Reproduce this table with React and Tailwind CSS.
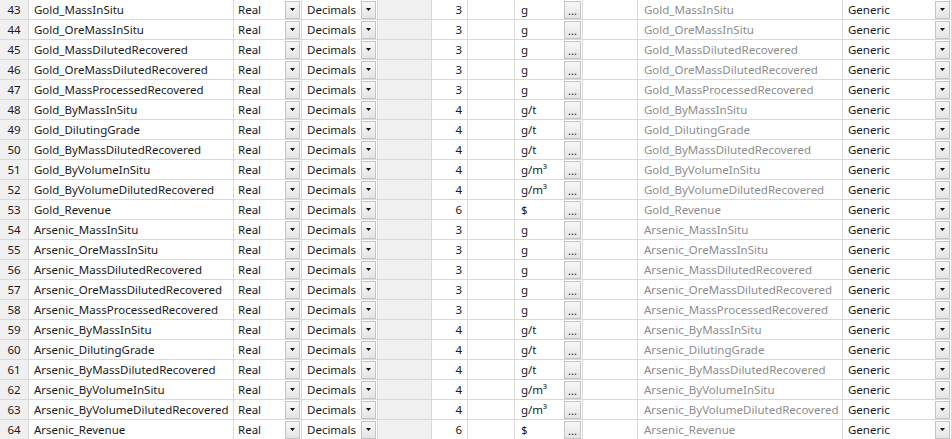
import React from 'react'

const rows = [
  [43, 'Gold_MassInSitu', 3, 'g'],
  [44, 'Gold_OreMassInSitu', 3, 'g'],
  [45, 'Gold_MassDilutedRecovered', 3, 'g'],
  [46, 'Gold_OreMassDilutedRecovered', 3, 'g'],
  [47, 'Gold_MassProcessedRecovered', 3, 'g'],
  [48, 'Gold_ByMassInSitu', 4, 'g/t'],
  [49, 'Gold_DilutingGrade', 4, 'g/t'],
  [50, 'Gold_ByMassDilutedRecovered', 4, 'g/t'],
  [51, 'Gold_ByVolumeInSitu', 4, 'g/m³'],
  [52, 'Gold_ByVolumeDilutedRecovered', 4, 'g/m³'],
  [53, 'Gold_Revenue', 6, '$'],
  [54, 'Arsenic_MassInSitu', 3, 'g'],
  [55, 'Arsenic_OreMassInSitu', 3, 'g'],
  [56, 'Arsenic_MassDilutedRecovered', 3, 'g'],
  [57, 'Arsenic_OreMassDilutedRecovered', 3, 'g'],
  [58, 'Arsenic_MassProcessedRecovered', 3, 'g'],
  [59, 'Arsenic_ByMassInSitu', 4, 'g/t'],
  [60, 'Arsenic_DilutingGrade', 4, 'g/t'],
  [61, 'Arsenic_ByMassDilutedRecovered', 4, 'g/t'],
  [62, 'Arsenic_ByVolumeInSitu', 4, 'g/m³'],
  [63, 'Arsenic_ByVolumeDilutedRecovered', 4, 'g/m³'],
  [64, 'Arsenic_Revenue', 6, '$'],
]

const cell = 'h-5 border-r border-b border-[#d9d9d9] flex items-center overflow-hidden whitespace-nowrap'

const DropButton = () => (
  <div className="ml-auto mr-px h-[18px] w-[15px] shrink-0 flex items-center justify-center border border-[#c3c3c3] bg-gradient-to-b from-[#f7f7f7] to-[#e4e4e4]">
    <svg width="5" height="3" viewBox="0 0 5 3">
      <path d="M0 0h5L2.5 3z" fill="#111" />
    </svg>
  </div>
)

const DotsButton = () => (
  <div className="ml-auto mr-px h-[18px] w-[17px] shrink-0 flex items-end justify-center border border-[#c3c3c3] bg-gradient-to-b from-[#f7f7f7] to-[#e4e4e4] text-[11px] leading-[14px] text-[#1a1a1a]">
    ...
  </div>
)

export default function App() {
  return (
    <div
      className="w-[952px] h-[439px] overflow-hidden bg-white text-[11.5px] text-[#1a1a1a]"
      style={{ fontFamily: '"Noto Sans", "Open Sans", sans-serif' }}
    >
      <div className="grid grid-cols-[29px_205px_68px_76px_54px_36px_47px_68px_55px_205px_109px]">
        {rows.map(([n, name, dec, unit]) => (
          <React.Fragment key={n}>
            <div className={`${cell} justify-center bg-[#f0f0f0] border-[#c8c8c8]`}>{n}</div>
            <div className={`${cell} pl-[5px]`}>{name}</div>
            <div className={`${cell} pl-1`}>
              <span>Real</span>
              <DropButton />
            </div>
            <div className={`${cell} pl-[5px]`}>
              <span>Decimals</span>
              <DropButton />
            </div>
            <div className={`${cell} bg-[#f0f0f0]`} />
            <div className={`${cell} justify-end pr-[5px]`}>{dec}</div>
            <div className={cell} />
            <div className={`${cell} pl-[6px]`}>
              <span>{unit}</span>
              <DotsButton />
            </div>
            <div className={cell} />
            <div className={`${cell} pl-[6px] text-[#8c8c8c]`}>{name}</div>
            <div className={`${cell} pl-[5px]`}>
              <span>Generic</span>
              <DropButton />
            </div>
          </React.Fragment>
        ))}
      </div>
    </div>
  )
}
